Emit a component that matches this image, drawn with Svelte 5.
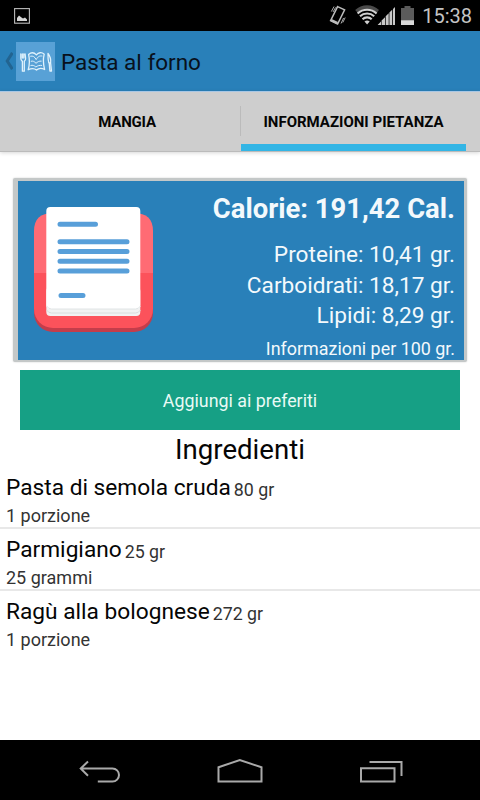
<script lang="ts">
	const tabs = [
		{ label: 'Mangia', active: false },
		{ label: 'Informazioni pietanza', active: true }
	];

	const nutrients = [
		{ name: 'Proteine', value: '10,41' },
		{ name: 'Carboidrati', value: '18,17' },
		{ name: 'Lipidi', value: '8,29' }
	];

	const ingredients = [
		{ name: 'Pasta di semola cruda', weight: '80 gr', portion: '1 porzione' },
		{ name: 'Parmigiano', weight: '25 gr', portion: '25 grammi' },
		{ name: 'Ragù alla bolognese', weight: '272 gr', portion: '1 porzione' }
	];
</script>

<div class="screen">
	<div class="status">
		<svg class="picture" viewBox="0 0 16 16" width="16" height="16">
			<rect x="0.6" y="0.6" width="14.8" height="14.6" fill="none" stroke="#bbb" stroke-width="1.1" />
			<path d="M3 13V10l2-2.5 2.5 2L9 10.5l2-1 2 2V13z" fill="#d4d4d4" />
		</svg>
		<div class="status-icons">
			<svg viewBox="0 0 80 24" width="80" height="24">
				<g fill="none" stroke="#bcbcbc">
					<path d="M10.6 4.6 17.6 7.8 10.6 22 3.6 18.6z" stroke-width="1.5" />
					<path d="M4.4 9.5l2.6-5M6 10l2.6-4.6M14 21.5l2.6-5.5M15.8 20.5l2.4-5" stroke-width="0.9" />
					<path d="M4.2 18.2l6.3 3" stroke-width="2.4" />
				</g>
				<path d="M28.2 8a17 17 0 0 1 23.8 0L40.1 22z" fill="#4a4a4a" />
				<path d="M30.6 11a13.5 13.5 0 0 1 19 0L40.1 22z" fill="#000" />
				<g fill="none" stroke="#d0d0d0" stroke-width="2.1">
					<path d="M30.6 11.4a14 14 0 0 1 19 0" />
					<path d="M33 14.3a10.5 10.5 0 0 1 14.2 0" />
					<path d="M35.5 17.2a6.8 6.8 0 0 1 9.2 0" />
				</g>
				<path d="M37.5 19.6a4 4 0 0 1 5.2 0L40.1 22.4z" fill="#d0d0d0" />
				<path d="M50.6 23 54 19.6V23zM54.6 23v-4.4l3.4-3.4V23zM58.7 23v-8.8l3-3V23zM62.4 23V10.6L65.2 7.8V23zM66 23V7L68 5v18z" fill="#c8c8c8" />
			</svg>
			<svg class="battery" viewBox="0 0 14 20" width="14" height="20">
				<path d="M3.5 0h6v2H13v13H0V2h3.5z" fill="#5b5b5b" />
				<path d="M0 14.3h13V19H0z" fill="#d8d8d8" />
			</svg>
			<span class="clock">15:38</span>
		</div>
	</div>

	<header class="action-bar">
		<svg class="up" viewBox="0 0 8 18" width="8" height="18">
			<path d="M7.4 .8 2.2 9 7.4 17.2" fill="none" stroke="#226491" stroke-width="3" />
		</svg>
		<svg class="logo" viewBox="0 0 39 39" width="39" height="39">
			<rect width="39" height="39" fill="#58a1d6" />
			<g fill="none" stroke="#e0f2fc" stroke-width="1.3" stroke-linecap="round" stroke-linejoin="round">
				<path d="M4.8 12v4.3c0 2 1 2.4 1.6 3V29.2h1.9V19.3c.8-.8 1.5-1.5 1.3-3L9.1 12M6.3 12v4M7.8 12v4" />
				<path d="M12.6 12.4c3-2.6 5.7-1.8 7.8.5 2-2.4 5.2-3.1 7.8-.7-1.3 5-.9 10.4.4 15.3-3.2-1.8-5.6-1.7-8.1.5-2.3-2-5-1.8-8.3-.3 1.5-5 1.5-10.3.4-15.3z" />
				<path d="M14.6 14.2c2.4-.6 4 .4 5.6 3.4 1.8-3.2 3.4-4 5.8-3.6M15.2 19.2c1.6-.6 3.2.3 4.8 2.1 1.6-1.4 3-2.4 5.2-2.2M14.9 23.4c1.8-.6 3.2.2 5 1.6 1.8-1.4 3.6-1.8 5.8-1.6" stroke-width="1" />
				<path d="M32 11.5c2.4 3 3 6 2.6 9.5l-1.8-.2c-.8-3-.9-6.2-.8-9.3zM33.2 21l.7 8h1.6l-.9-8" />
			</g>
		</svg>
		<h1>Pasta al forno</h1>
	</header>

	<nav class="tabs">
		{#each tabs as tab}
			<button class="tab" class:is-active={tab.active}>{tab.label}</button>
		{/each}
	</nav>

	<main>
		<section class="card">
			<svg class="document" viewBox="0 0 120 126" width="120" height="126">
				<defs>
					<clipPath id="tile"><rect width="119" height="121" rx="19" /></clipPath>
				</defs>
				<rect y="9" width="119" height="116" rx="19" fill="#c43d4b" />
				<path d="M0 66V24Q0 6 19 6h81q19 0 19 18v42z" fill="#ff6b74" />
				<path d="M0 66h119v55H0z" fill="#fc525b" clip-path="url(#tile)" />
				<rect x="12.3" y="80" width="94" height="29" rx="4" fill="#f1f1f1" />
				<path d="M12.5 103q2 3 5 3h84q3 0 5-3" fill="none" stroke="#d9dcdd" />
				<rect x="12.3" width="94" height="102" rx="4" fill="#fff" />
				<path d="M12.5 99q2 3 5 3h84q3 0 5-3" fill="none" stroke="#e0e5e6" />
				<path d="M26 17.3h35.5M26 34.8h67M26 44.5h67M26 54.3h67M26 64.1h67M27 88.4h22" stroke="#589fd9" stroke-width="5" stroke-linecap="round" />
			</svg>
			<div class="facts">
				<strong class="calories">Calorie: 191,42 Cal.</strong>
				{#each nutrients as nutrient}
					<span class="nutrient">{nutrient.name}: {nutrient.value} gr.</span>
				{/each}
				<span class="per">Informazioni per 100 gr.</span>
			</div>
		</section>

		<button class="favorite">Aggiungi ai preferiti</button>

		<h2>Ingredienti</h2>
		<ul>
			{#each ingredients as item}
				<li>
					<div class="line">
						<span class="name">{item.name}</span>
						<span class="weight">{item.weight}</span>
					</div>
					<div class="portion">{item.portion}</div>
				</li>
			{/each}
		</ul>
	</main>

	<footer class="nav-bar">
		<svg viewBox="0 0 480 60" width="480" height="60" fill="none" stroke="#a9a9a9" stroke-width="2">
			<path d="M88 21.5 80.7 28.5 88 35.8M81.5 28.5H112.5a6.5 6.5 0 0 1 0 13H97.8" />
			<path d="M218.5 41.5V27.3L239.8 20l21.7 7.3v14.2z" />
			<path d="M361 28.2h33.5v13.3H361zM369.5 22H401.5v14" />
		</svg>
	</footer>
</div>

<style>
	:global(body) {
		margin: 0;
		background: #fff;
	}

	.screen {
		display: flex;
		flex-direction: column;
		width: 480px;
		height: 800px;
		overflow: hidden;
		background: #fff;
		color: #050505;
		font-family: Roboto, sans-serif;
	}

	button {
		border: none;
		border-radius: 0;
		font-family: inherit;
	}

	.status {
		display: flex;
		justify-content: space-between;
		height: 31px;
		padding: 0 8px 0 14px;
		box-sizing: border-box;
		background: #000;
	}

	.picture {
		margin-top: 8px;
	}

	.status-icons {
		display: flex;
		align-items: flex-start;
	}

	.status-icons svg {
		margin-top: 2px;
	}

	.status-icons .battery {
		margin: 6px 7px 0 -6px;
	}

	.clock {
		color: #c4c4c4;
		font-size: 20px;
		line-height: 32px;
	}

	.action-bar {
		display: flex;
		align-items: center;
		height: 60px;
		padding-left: 5px;
		box-sizing: border-box;
		background: #2980b9;
	}

	.logo {
		margin: 0 6px 0 3px;
	}

	h1 {
		margin: 0;
		padding-top: 1px;
		color: #08111c;
		font-size: 22.5px;
		font-weight: 400;
	}

	.tabs {
		display: grid;
		grid-template-columns: 240px 226px;
		height: 61px;
		box-sizing: border-box;
		border-top: 1px solid #a9c7e4;
		border-bottom: 1px solid #bbb;
		background: linear-gradient(#bbb, #bbb) 240px 14px / 1px 30px no-repeat #cecece;
		box-shadow: 0 1px 4px rgba(0, 0, 0, 0.16);
	}

	.tab {
		padding: 8px 0 0;
		border-bottom: 7px solid transparent;
		background: none;
		color: #050505;
		font-size: 15px;
		font-weight: 700;
		text-transform: uppercase;
	}

	.tab:first-child {
		padding-left: 14px;
		letter-spacing: -0.2px;
	}

	.tab.is-active {
		margin-left: 1px;
		border-bottom-color: #33b5e5;
	}

	main {
		flex: 1;
		min-height: 0;
		padding-top: 26px;
	}

	.card {
		display: flex;
		justify-content: space-between;
		height: 184px;
		margin: 0 13px;
		padding: 0 9px 0 16px;
		box-sizing: border-box;
		border: solid #c4c8c8;
		border-width: 3px 3px 2px 5px;
		border-radius: 2px;
		background: #2980b9;
		box-shadow: 0 0 2px rgba(0, 0, 0, 0.2);
	}

	.document {
		margin-top: 26px;
	}

	.facts {
		display: flex;
		flex-direction: column;
		align-items: flex-end;
		color: #f3f9fc;
	}

	.calories {
		margin: 10px 0 13px;
		font-size: 27.45px;
		line-height: 36px;
	}

	.nutrient {
		font-size: 22.65px;
		line-height: 30.5px;
	}

	.per {
		font-size: 17.9px;
		line-height: 33px;
	}

	.favorite {
		display: block;
		width: 440px;
		height: 60px;
		margin: 8px 20px 0;
		padding: 0;
		background: #16a085;
		color: #e9faf5;
		font-size: 17.85px;
	}

	h2 {
		margin: 0;
		font-size: 27.6px;
		font-weight: 400;
		line-height: 40px;
		text-align: center;
	}

	ul {
		margin: 0;
		padding: 0;
		list-style: none;
	}

	li {
		height: 62px;
		padding: 3px 6px 0;
		box-sizing: border-box;
		border-bottom: 2px solid #e8e8e8;
	}

	li:first-child {
		height: 59px;
		padding-top: 0;
	}

	li:last-child {
		border-bottom: none;
	}

	.line {
		display: flex;
		gap: 3px;
	}

	.name {
		font-size: 22.7px;
		line-height: 36px;
	}

	.weight {
		color: #333;
		font-size: 17.8px;
		line-height: 40px;
	}

	.portion {
		margin-top: -7px;
		color: #333;
		font-size: 18px;
		line-height: 26px;
	}

	.nav-bar {
		height: 60px;
		background: #000;
	}
</style>
